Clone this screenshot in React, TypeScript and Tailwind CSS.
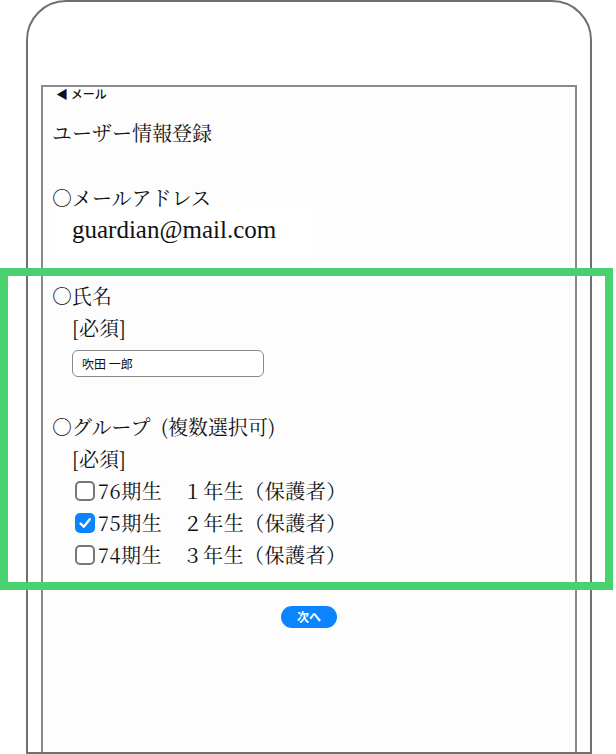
import React from "react";

const serif = {
  fontFamily:
    '"Noto Serif CJK JP", "Liberation Serif", "DejaVu Serif", "Noto Sans CJK JP", serif',
};

function Check({ checked }: { checked?: boolean }) {
  if (checked) {
    return (
      <span className="flex h-[20px] w-[20px] min-w-[20px] shrink-0 items-center justify-center rounded-[5px] bg-[#0a84ff]">
        <svg width="14" height="14" viewBox="0 0 14 14" fill="none">
          <path
            d="M2.5 7.5 L5.8 10.8 L11.8 3.2"
            stroke="white"
            strokeWidth="2.3"
            strokeLinecap="round"
            strokeLinejoin="round"
          />
        </svg>
      </span>
    );
  }
  return (
    <span className="block h-[20px] w-[20px] min-w-[20px] shrink-0 rounded-[5px] border-2 border-[#777777] bg-white" />
  );
}

export default function App() {
  const rows = [
    { k: "76期生", g: "１年生（保護者）", c: false },
    { k: "75期生", g: "２年生（保護者）", c: true },
    { k: "74期生", g: "３年生（保護者）", c: false },
  ];
  return (
    <div className="relative h-[754px] w-[616px] overflow-hidden bg-white text-[#111]">
      {/* phone frame */}
      <div className="ml-[26px] flex h-[754px] w-[566px] flex-col rounded-t-[40px] border-2 border-[#707070] pt-[83px]">
        <div className="mx-[13px] flex-1 border-x-2 border-t-2 border-[#8a8a8a] bg-[#fdfdfd] pl-[9px]">
          <div
            className="ml-[4px] text-[12px] leading-[14px] font-medium"
            style={{ fontFamily: '"Noto Sans CJK JP", sans-serif' }}
          >
            ◀ メール
          </div>
          <div style={serif} className="mt-[16px] text-[20px] leading-[32px]">
            ユーザー情報登録
          </div>

          <div style={serif} className="mt-[33px] text-[20px] leading-[32px]">
            ○メールアドレス
          </div>
          <div className="-mt-[7px] ml-[4px] h-[55px] w-[256px] bg-white pl-[16px] pt-[7px]">
            <span
              className="text-[25px] leading-[32px]"
              style={{ fontFamily: '"Liberation Serif", "DejaVu Serif", serif' }}
            >
              guardian@mail.com
            </span>
          </div>

          <div style={serif} className="mt-[18px] text-[20px] leading-[32px]">
            ○氏名
          </div>
          <div style={serif} className="pl-[20px] text-[20px] leading-[32px]">
            [必須]
          </div>
          <div className="ml-[20px] mt-[6px] flex h-[27px] w-[192px] items-center rounded-[6px] border border-[#8a8a8a] bg-white pl-[9px]">
            <span
              className="text-[12px]"
              style={{ fontFamily: '"Noto Sans CJK JP", sans-serif' }}
            >
              吹田 一郎
            </span>
          </div>

          <div
            style={serif}
            className="mt-[34px] text-[20px] leading-[32px] whitespace-pre"
          >
            {"○グループ  (複数選択可)"}
          </div>
          <div style={serif} className="pl-[20px] text-[20px] leading-[32px]">
            [必須]
          </div>
          <div className="flex flex-col">
            {rows.map((r) => (
              <div
                key={r.k}
                className="flex h-[32px] items-center pl-[23px]"
              >
                <Check checked={r.c} />
                <span
                  style={serif}
                  className="ml-[3px] text-[20px] leading-[32px] tracking-[0.5px] whitespace-pre"
                >
                  {r.k + "　" + r.g}
                </span>
              </div>
            ))}
          </div>

          <div className="mt-[35px] flex justify-center pr-[9px]">
            <button
              className="flex h-[22px] w-[56px] items-center justify-center rounded-full bg-[#0a84ff] text-[12px] font-bold text-white"
              style={{ fontFamily: '"Noto Sans CJK JP", sans-serif' }}
            >
              次へ
            </button>
          </div>
        </div>
      </div>

      {/* highlight annotation */}
      <div className="pointer-events-none absolute left-0 top-[268px] h-[322px] w-[613px] border-[8px] border-[#47d16f]" />
    </div>
  );
}
